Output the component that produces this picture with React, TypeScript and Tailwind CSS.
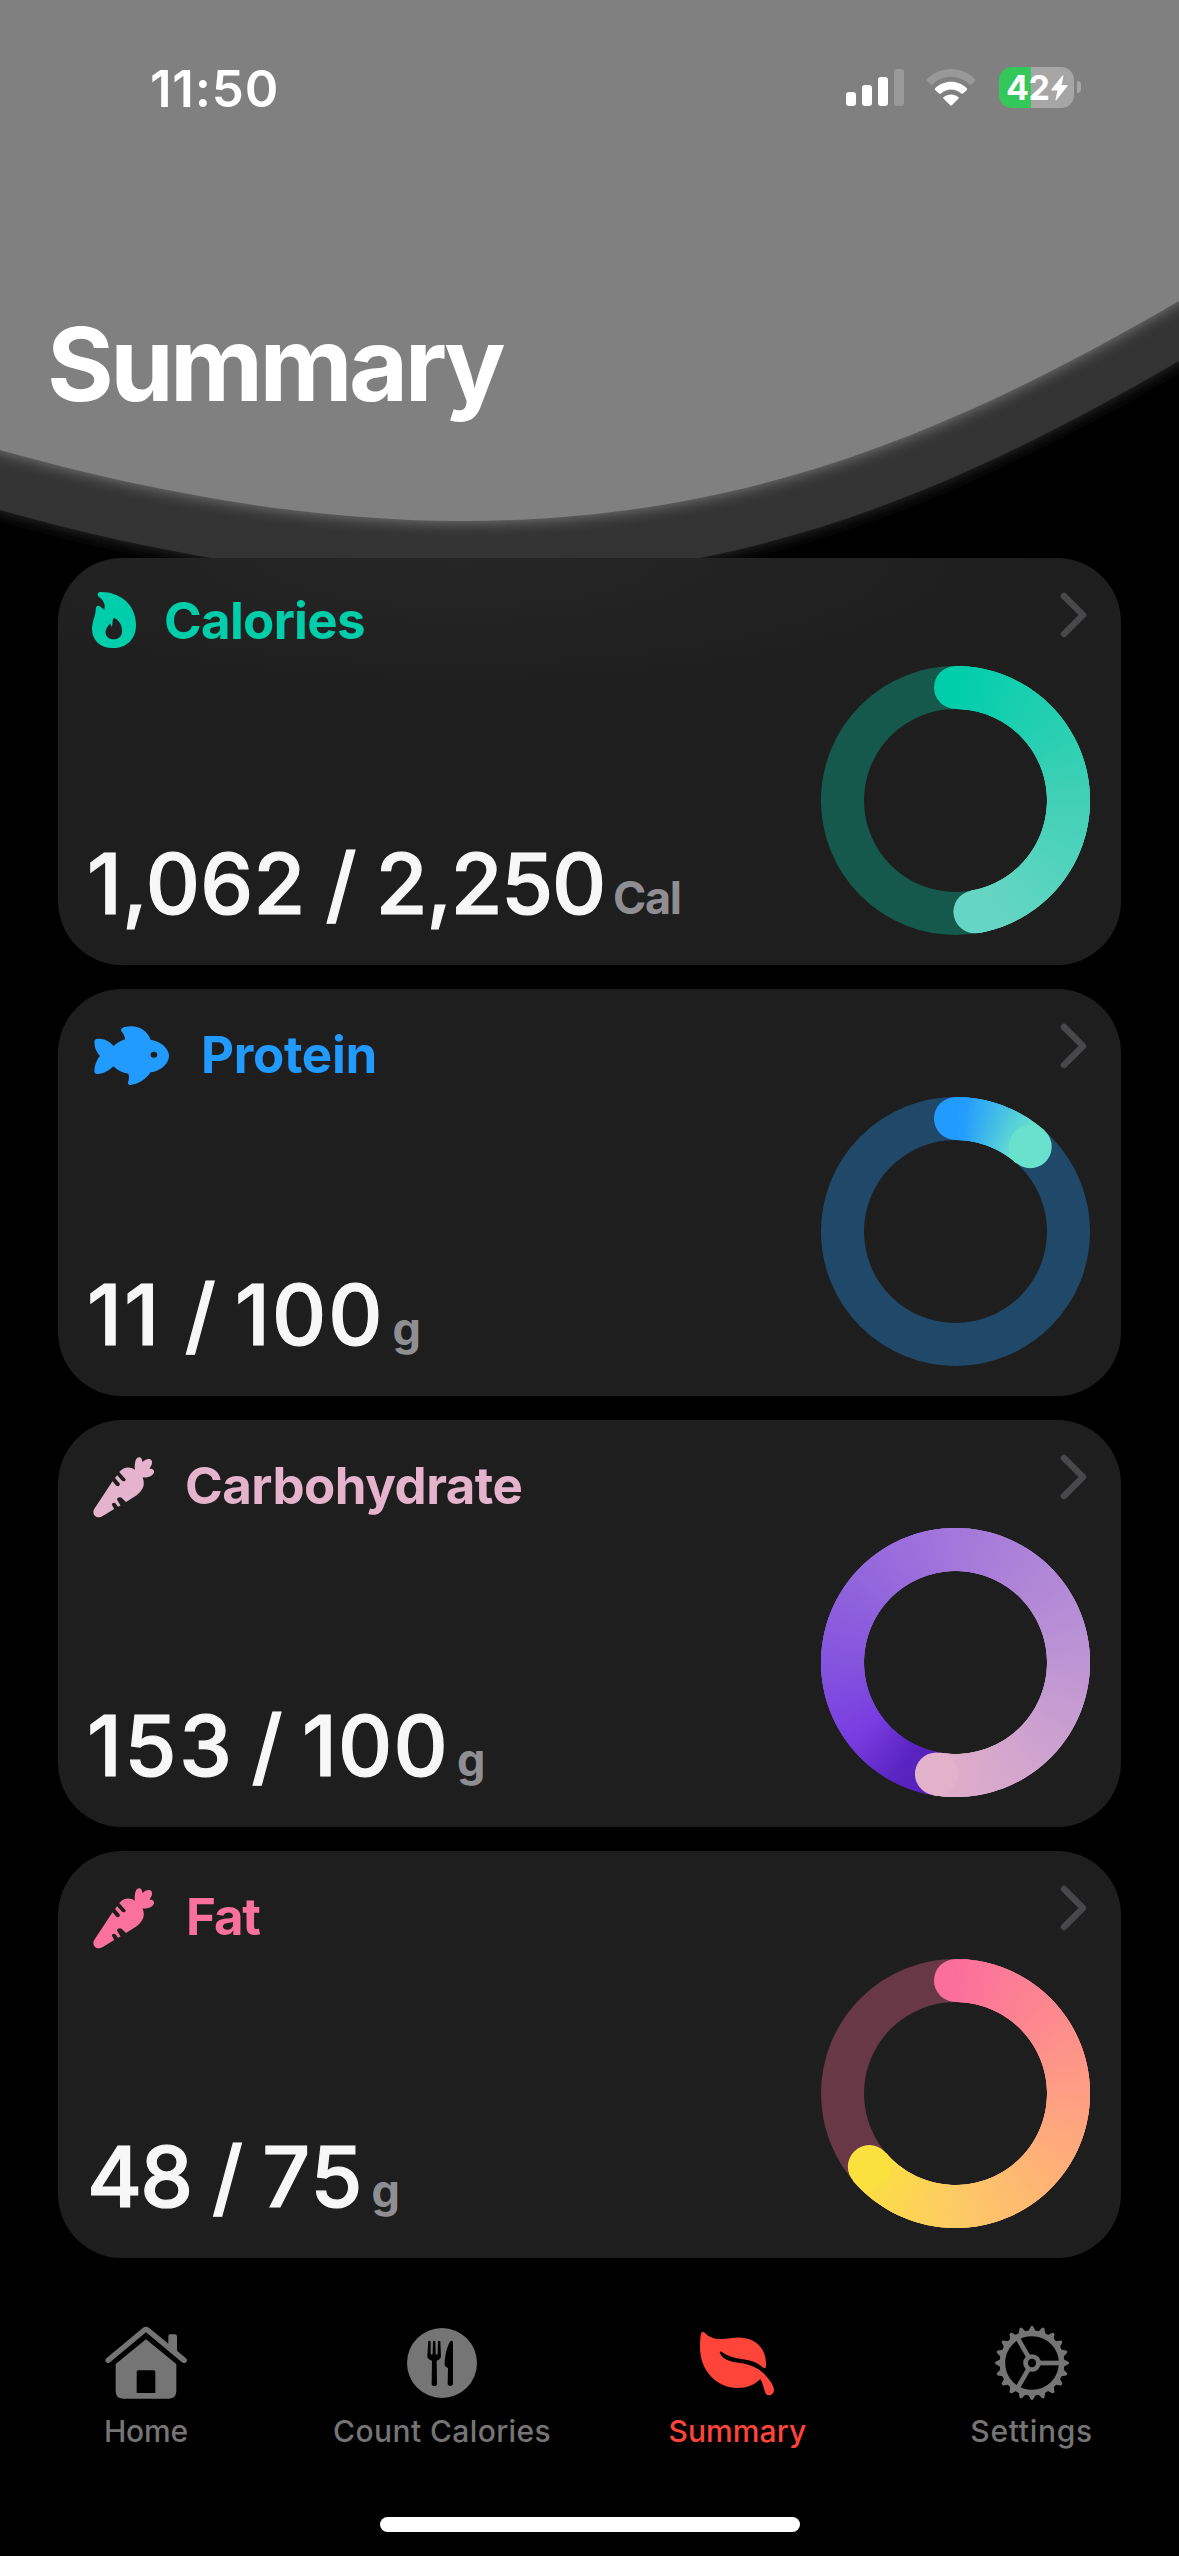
import type { ReactNode } from "react";

type Stop = [number, string];

function hexToRgb(hex: string) {
  return [1, 3, 5].map((i) => parseInt(hex.slice(i, i + 2), 16));
}

function colorAt(stops: Stop[], f: number) {
  for (let i = 1; i < stops.length; i++) {
    const [f0, c0] = stops[i - 1];
    const [f1, c1] = stops[i];
    if (f <= f1) {
      const k = (f - f0) / (f1 - f0);
      const a = hexToRgb(c0);
      const b = hexToRgb(c1);
      return `rgb(${a.map((v, j) => Math.round(v + (b[j] - v) * k)).join(",")})`;
    }
  }
  return stops[stops.length - 1][1];
}

const R = 113;
const C = 134.5;

function point(turn: number) {
  const a = turn * 2 * Math.PI;
  return [C + R * Math.sin(a), C - R * Math.cos(a)];
}

/* Progress ring whose colour follows the angle; built from thin overlapping slices. */
function Ring({ progress, track, stops }: { progress: number; track: string; stops: Stop[] }) {
  const start = Math.max(0, progress - 1);
  const sweep = progress - start;
  const n = Math.round(sweep * 320);
  const slices = Array.from({ length: n }, (_, i) => {
    const t0 = start + (sweep * i) / n;
    const t1 = start + (sweep * Math.min(n, i + 3)) / n;
    const [x0, y0] = point(t0);
    const [x1, y1] = point(t1);
    return (
      <path
        key={i}
        d={`M${x0} ${y0}A${R} ${R} 0 0 1 ${x1} ${y1}`}
        stroke={colorAt(stops, (i + 0.5) / n)}
        strokeWidth="43"
        fill="none"
      />
    );
  });
  const [sx, sy] = point(start);
  const [ex, ey] = point(progress);
  return (
    <svg className="h-[269px] w-[269px]" viewBox="0 0 269 269">
      <circle cx={C} cy={C} r={R} fill="none" stroke={track} strokeWidth="43" />
      {start === 0 && <circle cx={sx} cy={sy} r="21.5" fill={stops[0][1]} />}
      {slices}
      <circle cx={ex} cy={ey} r="21.5" fill={stops[stops.length - 1][1]} />
    </svg>
  );
}

function Flame() {
  return (
    <svg className="h-[56px] w-[44px]" viewBox="100 126 104 168" preserveAspectRatio="none" fill="currentColor">
      <path
        fillRule="evenodd"
        d="M121 126C168 126 204 166 204 224C204 268 182 294 149 294C119 294 100 270 100 236C100 213 109 197 109 176C109 168 115 165 120 170L129 179C133 163 126 149 116 140C111 134 113 126 121 126ZM152 203C147 209 150 219 147 230C144 227 144 223 142 219C140 226 132 235 132 247C132 260 140 268 151 268C163 268 171 259 171 243C171 224 163 209 152 203Z"
      />
    </svg>
  );
}

function Fish() {
  return (
    <svg className="h-[59px] w-[75px]" viewBox="105 138 179 177" preserveAspectRatio="none" fill="currentColor">
      <path
        fillRule="evenodd"
        d="M106 187C106 178 109 176 115 176C131 176 143 184 152 198C160 189 169 182 179 178C179 168 176 162 171 155C168 150 170 145 176 142C205 131 232 148 240 179C266 184 284 206 284 228C284 251 263 274 240 277C229 297 212 312 193 315C188 315 185 312 186 307C189 298 189 289 187 281C174 279 161 271 151 259C141 272 129 281 113 282C108 282 106 280 106 274C106 258 111 240 119 228C111 217 106 204 106 187ZM248 215A8 9 0 1 0 248 233A8 9 0 1 0 248 215Z"
      />
    </svg>
  );
}

function Carrot() {
  return (
    <svg className="h-[61px] w-[61px]" viewBox="103 137 144 184" preserveAspectRatio="none" fill="currentColor">
      <path d="M202 176C200 160 203 145 207 140C211 136 216 137 218 143L220 152C227 143 237 140 241 147C245 155 240 166 236 172C244 172 248 177 247 184C244 194 234 200 220 199C227 219 221 239 206 252L181 273L171 261C168 256 158 260 160 266L168 283L162 287L157 278C153 271 146 277 148 282L153 294L126 315C114 325 103 315 104 301C104 297 107 292 109 288L149 210L157 222C161 228 168 224 166 217L155 200L160 192L171 208C175 213 182 209 180 204L165 182C176 166 191 165 202 176Z" />
    </svg>
  );
}

function HomeIcon() {
  return (
    <svg className="h-[76px] w-[84px]" viewBox="131 76 252 228" fill="currentColor">
      <path d="M141 190C134 187 133 180 138 176L248 84C253 80 261 80 266 84L324 132V109Q324 104 329 104H344Q350 104 350 110V153L377 176C382 180 381 187 374 190C370 191 367 189 364 187L257 98L150 187C147 189 145 191 141 190Z" />
      <path fillRule="evenodd" d="M257 119L348 193V275Q348 297 326 297H188Q166 297 166 275V193ZM234 212Q229 212 229 217V280H285V217Q285 212 280 212Z" />
    </svg>
  );
}

function ForkKnifeIcon() {
  return (
    <svg className="h-[76px] w-[76px]" viewBox="1032 75 228 228" fill="currentColor">
      <path
        fillRule="evenodd"
        d="M1146 84A105 105 0 1 1 1146 294A105 105 0 1 1 1146 84ZM1105 124L1102 168C1102 176 1109 180 1116 182L1115 251Q1115 258 1123 258Q1131 258 1131 251L1130 182C1137 180 1143 176 1143 168L1141 124Q1138 120 1134 124L1133 162Q1130 166 1127 162L1126 124Q1122 120 1119 124L1118 162Q1115 166 1112 162L1112 124Q1108 120 1105 124ZM1179 128C1179 122 1174 120 1170 125C1160 142 1154 168 1154 192C1154 199 1158 201 1164 204L1163 250Q1163 258 1171 258Q1179 258 1179 250Z"
      />
    </svg>
  );
}

function LeafIcon() {
  return (
    <svg className="h-[76px] w-[84px]" viewBox="228 75 252 228" fill="currentColor">
      <path d="M246 101C248 95 253 94 258 99C270 112 285 117 305 117C328 117 344 112 366 113C415 115 443 150 441 198C441 205 435 206 430 201C416 188 395 181 372 178C347 174 325 169 309 156C305 152 301 155 303 160C311 180 338 186 364 189C397 193 425 208 442 229C456 246 465 259 465 270C465 279 458 286 449 286C435 285 438 262 424 237C405 256 382 264 357 264C293 264 243 213 243 142C243 126 244 111 246 101Z" />
    </svg>
  );
}

function GearIcon() {
  const teeth = Array.from({ length: 20 }, (_, i) => i * 18);
  return (
    <svg className="h-[76px] w-[76px]" viewBox="-114 -114 228 228" fill="currentColor">
      {teeth.map((a) => (
        <path key={a} transform={`rotate(${a})`} d="M92 -13L109 -4Q114 0 109 4L92 13Z" />
      ))}
      <circle r="89" fill="none" stroke="currentColor" strokeWidth="17" />
      <circle r="19.5" fill="none" stroke="currentColor" strokeWidth="14" />
      {[0, 120, 240].map((a) => (
        <path key={a} transform={`rotate(${a})`} d="M22 -7H86V7H22Z" />
      ))}
    </svg>
  );
}

function StatusBar() {
  return (
    <div className="flex h-[130px] items-start justify-between pr-[98px] pl-[150px] text-white">
      <div className="mt-[63px] text-[51px] leading-none font-semibold tracking-[0.8px]">11:50</div>
      <div className="mt-[67px] flex items-start">
        <svg className="mt-[2px] h-[37px] w-[58px]" viewBox="0 0 58 37" fill="#fff">
          <rect x="0" y="23" width="10" height="14" rx="3.2" />
          <rect x="16" y="16" width="10" height="21" rx="3.2" />
          <rect x="32" y="8" width="10" height="29" rx="3.2" />
          <rect x="48" y="0" width="10" height="37" rx="3.2" fill="#999" />
        </svg>
        <svg className="mt-[1px] ml-[22px] h-[39px] w-[50px]" viewBox="438 84 153 117">
          <path d="M441 117C482 76 547 76 588 117Q590 120 588 122L577 133Q574 135 571 133C540 102 489 102 458 133Q455 135 452 133L441 122Q439 120 441 117Z" fill="#999" />
          <path d="M466 145C492 118 537 118 563 145Q565 148 563 150L551 161Q549 163 546 161C528 145 502 145 484 161Q481 163 478 161L466 150Q464 148 466 145Z" fill="#fff" />
          <path d="M492 172C504 161 525 161 537 172Q539 175 537 177L517 197Q514 199 512 197L492 177Q490 175 492 172Z" fill="#fff" />
        </svg>
        <div className="ml-[23px] flex h-[41px] w-[75px] items-start rounded-[13px] bg-[linear-gradient(90deg,#34c759_32px,#a6a6a6_32px)] pl-[7px]">
          <span className="mt-[4px] w-[45px] text-[34px] leading-none font-bold tracking-[-0.4px]">42</span>
          <svg className="mt-[8px] h-[26px] w-[17px]" viewBox="0 0 17 26" fill="#fff">
            <path d="M11.5 .6Q12.6 0 12.4 1.2L10.5 10H16Q17 10.200 16.4 11.200L5.400 25Q4.400 26 4.500 24.600L6.500 15.500H1Q0 15.200 .6 14.200Z" />
          </svg>
        </div>
        <div className="mt-[14px] ml-[3px] h-[12px] w-[4px] rounded-r-full bg-[#a6a6a6]" />
      </div>
    </div>
  );
}

type CardProps = {
  icon: ReactNode;
  title: string;
  head: string;
  eaten: string;
  eatenClass: string;
  goal: string;
  goalClass: string;
  unit: string;
  tone?: string;
  progress: number;
  track: string;
  stops: Stop[];
};

function Card({ icon, title, head, eaten, eatenClass, goal, goalClass, unit, tone = "bg-[#1e1e1e]", progress, track, stops }: CardProps) {
  return (
    <section className={`flex h-[407px] justify-between rounded-[64px] pl-[29px] ${tone}`}>
      <div className="flex flex-col justify-between">
        <div className={`flex items-start ${head}`}>
          {icon}
          <h2 className="mt-[3px] text-[51px] leading-none font-bold">{title}</h2>
        </div>
        <div className="mb-[39px] flex items-baseline leading-none">
          <span className="text-[84px] font-medium whitespace-pre text-[#f7f7f7] [-webkit-text-stroke:1.2px_#f7f7f7]">
            <span className={eatenClass}>{eaten}</span>
            <span className="tracking-[-1.5px]"> / </span>
            <span className={goalClass}>{goal}</span>
          </span>
          <span className="ml-[8px] text-[45px] font-bold tracking-[-1.3px] text-[#8e8e93]">{unit}</span>
        </div>
      </div>
      <div className="flex flex-col items-end pt-[34px] pr-[31px]">
        <svg className="mr-[2px] h-[46px] w-[28px]" viewBox="0 0 28 46" fill="none" stroke="#48484a" strokeWidth="6.5" strokeLinecap="round" strokeLinejoin="round">
          <path d="M4 4L23 23L4 42" />
        </svg>
        <div className="mt-[27.5px]">
          <Ring progress={progress} track={track} stops={stops} />
        </div>
      </div>
    </section>
  );
}

function Tab({ icon, label, style }: { icon: ReactNode; label: string; style: string }) {
  return (
    <div className={`flex w-[295px] flex-col items-center ${style}`}>
      {icon}
      <span className="mt-[15px] text-[30px] leading-none font-medium">{label}</span>
    </div>
  );
}

const EDGE = "C150 492 310 521 462 521C750 521 960 428 1179 301";

export default function App() {
  return (
    <div className="relative flex h-[2556px] w-[1179px] flex-col overflow-hidden bg-black font-['Inter',sans-serif]">
      <svg className="absolute inset-0 h-[640px] w-[1179px]" viewBox="0 0 1179 640">
        <defs>
          <filter id="glow" x="-10%" y="-10%" width="120%" height="120%">
            <feGaussianBlur stdDeviation="8" />
          </filter>
        </defs>
        <g transform="translate(0 60)">
          <path d={`M-60 -200V430L0 450${EDGE}L1240 268V-200Z`} fill="#333" filter="url(#glow)" />
          <path d={`M0 -200V450${EDGE}V-200Z`} fill="#333" />
        </g>
        <path d={`M-60 -200V430L0 450${EDGE}L1240 268V-200Z`} fill="#808080" filter="url(#glow)" />
        <path d={`M0 -200V450${EDGE}V-200Z`} fill="#808080" />
      </svg>

      <div className="relative flex flex-col">
        <StatusBar />
        <h1 className="mt-[183px] ml-[47px] h-[245px] text-[102px] leading-none font-bold tracking-[-3.6px] text-white">Summary</h1>

        <main className="mx-[58px] flex flex-col gap-6">
          <Card
            icon={<Flame />}
            title="Calories"
            head="gap-[28px] pt-[34px] pl-[5px] text-[#00ceaa] tracking-[-0.7px]"
            eaten="1,062"
            eatenClass="tracking-[0.3px] -mr-[1px]"
            goal="2,250"
            goalClass="tracking-[-1.2px]"
            unit="Cal"
            tone="bg-[radial-gradient(ellipse_620px_150px_at_400px_0px,#262626,#1e1e1e)]"
            progress={0.4725}
            track="#15584c"
            stops={[[0, "#00ceaa"], [0.5, "#3fd0b6"], [0.96, "#66d6c4"], [1, "#66d6c4"]]}
          />
          <Card
            icon={<Fish />}
            title="Protein"
            head="gap-[32px] pt-[37px] pl-[7px] text-[#219bff] tracking-[-0.3px]"
            eaten="11"
            eatenClass="tracking-[2.5px] mr-[2px]"
            goal="100"
            goalClass="tracking-[2px]"
            unit="g"
            progress={0.115}
            track="#204868"
            stops={[[0, "#219bff"], [0.12, "#259efc"], [0.5, "#46bfe5"], [0.88, "#69e1cc"], [1, "#69e1cc"]]}
          />
          <Card
            icon={<Carrot />}
            title="Carbohydrate"
            head="gap-[31px] pt-[37px] pl-[6px] text-[#e5b3cb] tracking-[-0.5px]"
            eaten="153"
            eatenClass="tracking-[2.75px] -mr-[4px]"
            goal="100"
            goalClass="tracking-[1.2px]"
            unit="g"
            progress={1.527}
            track="#50394a"
            stops={[
              [0, "#5520b8"],
              [0.05, "#5a24c2"],
              [0.12, "#783ce0"],
              [0.22, "#8454de"],
              [0.345, "#9367dc"],
              [0.47, "#a377db"],
              [0.72, "#bd95d4"],
              [0.845, "#cda2cf"],
              [0.97, "#deadca"],
              [1, "#e2b1ca"],
            ]}
          />
          <Card
            icon={<Carrot />}
            title="Fat"
            head="gap-[32px] pt-[37px] pl-[6px] text-[#fb719d] tracking-[-1.2px]"
            eaten="48"
            eatenClass="tracking-[-2px]"
            goal="75"
            goalClass="tracking-[1px]"
            unit="g"
            progress={0.638}
            track="#683846"
            stops={[[0, "#fb6f9c"], [0.39, "#fe9e84"], [0.78, "#fdca66"], [1, "#fbe13e"]]}
          />
        </main>

        <nav className="mt-[67px] flex">
          <Tab icon={<HomeIcon />} label="Home" style="pr-[3px] text-[#757575] tracking-[-0.2px]" />
          <Tab icon={<ForkKnifeIcon />} label="Count Calories" style="text-[#757575] tracking-[0.4px]" />
          <Tab icon={<LeafIcon />} label="Summary" style="pl-[1px] text-[#ff453a] tracking-[0.1px]" />
          <Tab icon={<GearIcon />} label="Settings" style="text-[#757575] tracking-[0.7px]" />
        </nav>
        <div className="mt-[71px] h-[15px] w-[420px] self-center rounded-full bg-white" />
      </div>
    </div>
  );
}
